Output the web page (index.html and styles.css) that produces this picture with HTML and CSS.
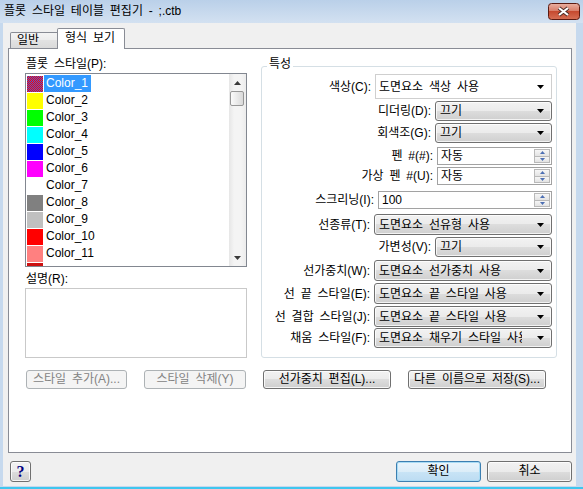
FILE: index.html
```html
<!DOCTYPE html>
<html lang="ko">
<head>
<meta charset="utf-8">
<title>플롯 스타일 테이블 편집기</title>
<link rel="stylesheet" href="styles.css">
</head>
<body>
<div class="window">
  <div class="titlebar">
    <span class="title">플롯 스타일 테이블 편집기 - ;.ctb</span>
    <svg class="close-btn" width="32" height="17" viewBox="0 0 32 17">
      <defs>
        <linearGradient id="cg" x1="0" y1="0" x2="0" y2="1">
          <stop offset="0" stop-color="#eab0a2"/>
          <stop offset="0.45" stop-color="#d9806c"/>
          <stop offset="0.5" stop-color="#c64a30"/>
          <stop offset="1" stop-color="#d77055"/>
        </linearGradient>
      </defs>
      <rect x="0.5" y="0.5" width="31" height="16" rx="3" fill="url(#cg)" stroke="#5b1b12"/>
      <path d="M11 5 L20 12 M20 5 L11 12" stroke="#4a2a25" stroke-width="4" fill="none"/>
      <path d="M11 5 L20 12 M20 5 L11 12" stroke="#ffffff" stroke-width="2.2" fill="none"/>
    </svg>
  </div>
  <div class="client">
    <div class="tabs">
      <div class="tab">일반</div>
      <div class="tab active">형식 보기</div>
    </div>
    <div class="panel">
      <div class="panel-top">
        <div class="left-col">
          <div class="lbl">플롯 스타일(P):</div>
          <div class="listbox">
            <div class="items">
              <div class="item selected"><span class="sw c1"></span><span class="name">Color_1</span></div>
              <div class="item"><span class="sw c2"></span><span class="name">Color_2</span></div>
              <div class="item"><span class="sw c3"></span><span class="name">Color_3</span></div>
              <div class="item"><span class="sw c4"></span><span class="name">Color_4</span></div>
              <div class="item"><span class="sw c5"></span><span class="name">Color_5</span></div>
              <div class="item"><span class="sw c6"></span><span class="name">Color_6</span></div>
              <div class="item"><span class="sw c7"></span><span class="name">Color_7</span></div>
              <div class="item"><span class="sw c8"></span><span class="name">Color_8</span></div>
              <div class="item"><span class="sw c9"></span><span class="name">Color_9</span></div>
              <div class="item"><span class="sw c10"></span><span class="name">Color_10</span></div>
              <div class="item"><span class="sw c11"></span><span class="name">Color_11</span></div>
              <div class="item"><span class="sw c12"></span></div>
            </div>
            <div class="vscroll">
              <div class="sb-btn"><svg width="7" height="4" viewBox="0 0 7 4"><polygon points="0,4 7,4 3.5,0" fill="#3a3a3a"/></svg></div>
              <div class="sb-thumb"></div>
              <div class="sb-track"></div>
              <div class="sb-btn"><svg width="7" height="4" viewBox="0 0 7 4"><polygon points="0,0 7,0 3.5,4" fill="#3a3a3a"/></svg></div>
            </div>
          </div>
          <div class="lbl desc-lbl">설명(R):</div>
          <div class="desc"></div>
        </div>
        <div class="group">
          <div class="group-title">특성</div>
          <div class="rows">
            <div class="row h25 g2">
              <span class="lab">색상(C):</span>
              <div class="combo plain w177"><span class="val">도면요소 색상 사용</span><svg class="arr" width="7" height="4" viewBox="0 0 7 4"><polygon points="0,0 7,0 3.5,4" fill="#000"/></svg></div>
            </div>
            <div class="row h20 g2">
              <span class="lab">디더링(D):</span>
              <div class="combo w117"><span class="val">끄기</span><svg class="arr" width="7" height="4" viewBox="0 0 7 4"><polygon points="0,0 7,0 3.5,4" fill="#000"/></svg></div>
            </div>
            <div class="row h20 g4">
              <span class="lab">회색조(G):</span>
              <div class="combo w117"><span class="val">끄기</span><svg class="arr" width="7" height="4" viewBox="0 0 7 4"><polygon points="0,0 7,0 3.5,4" fill="#000"/></svg></div>
            </div>
            <div class="row h18 g2">
              <span class="lab">펜 #(#):</span>
              <div class="spin w115"><span class="val">자동</span>
                <div class="updown">
                  <div class="ud"><svg width="5" height="3" viewBox="0 0 5 3"><polygon points="0,3 5,3 2.5,0" fill="#4d6fb3"/></svg></div>
                  <div class="ud"><svg width="5" height="3" viewBox="0 0 5 3"><polygon points="0,0 5,0 2.5,3" fill="#4d6fb3"/></svg></div>
                </div>
              </div>
            </div>
            <div class="row h18 g6">
              <span class="lab">가상 펜 #(U):</span>
              <div class="spin w115"><span class="val">자동</span>
                <div class="updown">
                  <div class="ud"><svg width="5" height="3" viewBox="0 0 5 3"><polygon points="0,3 5,3 2.5,0" fill="#4d6fb3"/></svg></div>
                  <div class="ud"><svg width="5" height="3" viewBox="0 0 5 3"><polygon points="0,0 5,0 2.5,3" fill="#4d6fb3"/></svg></div>
                </div>
              </div>
            </div>
            <div class="row h18 g5">
              <span class="lab">스크리닝(I):</span>
              <div class="spin w174"><span class="val">100</span>
                <div class="updown">
                  <div class="ud"><svg width="5" height="3" viewBox="0 0 5 3"><polygon points="0,3 5,3 2.5,0" fill="#4d6fb3"/></svg></div>
                  <div class="ud"><svg width="5" height="3" viewBox="0 0 5 3"><polygon points="0,0 5,0 2.5,3" fill="#4d6fb3"/></svg></div>
                </div>
              </div>
            </div>
            <div class="row h21 g2">
              <span class="lab">선종류(T):</span>
              <div class="combo w178"><span class="val">도면요소 선유형 사용</span><svg class="arr" width="7" height="4" viewBox="0 0 7 4"><polygon points="0,0 7,0 3.5,4" fill="#000"/></svg></div>
            </div>
            <div class="row h20 g3">
              <span class="lab">가변성(V):</span>
              <div class="combo w117"><span class="val">끄기</span><svg class="arr" width="7" height="4" viewBox="0 0 7 4"><polygon points="0,0 7,0 3.5,4" fill="#000"/></svg></div>
            </div>
            <div class="row h21 g2">
              <span class="lab">선가중치(W):</span>
              <div class="combo w178"><span class="val">도면요소 선가중치 사용</span><svg class="arr" width="7" height="4" viewBox="0 0 7 4"><polygon points="0,0 7,0 3.5,4" fill="#000"/></svg></div>
            </div>
            <div class="row h21 g2">
              <span class="lab">선 끝 스타일(E):</span>
              <div class="combo w178"><span class="val">도면요소 끝 스타일 사용</span><svg class="arr" width="7" height="4" viewBox="0 0 7 4"><polygon points="0,0 7,0 3.5,4" fill="#000"/></svg></div>
            </div>
            <div class="row h21 g1">
              <span class="lab">선 결합 스타일(J):</span>
              <div class="combo w178"><span class="val">도면요소 끝 스타일 사용</span><svg class="arr" width="7" height="4" viewBox="0 0 7 4"><polygon points="0,0 7,0 3.5,4" fill="#000"/></svg></div>
            </div>
            <div class="row h20">
              <span class="lab">채움 스타일(F):</span>
              <div class="combo w178"><span class="val cut">도면요소 채우기 스타일 사용</span><svg class="arr" width="7" height="4" viewBox="0 0 7 4"><polygon points="0,0 7,0 3.5,4" fill="#000"/></svg></div>
            </div>
          </div>
        </div>
      </div>
      <div class="btn-row">
        <div class="btn disabled w101">스타일 추가(A)...</div>
        <div class="btn disabled w102">스타일 삭제(Y)</div>
        <div class="btn w128">선가중치 편집(L)...</div>
        <div class="btn w138">다른 이름으로 저장(S)...</div>
      </div>
    </div>
    <div class="footer">
      <div class="btn tall help">?</div>
      <div class="btn tall default ok">확인</div>
      <div class="btn tall cancel">취소</div>
    </div>
  </div>
</div>
</body>
</html>
```

FILE: styles.css
```css
* { box-sizing: border-box; }
html, body { margin: 0; padding: 0; }
body {
  width: 583px;
  height: 489px;
  overflow: hidden;
  font-family: "Liberation Sans", "Noto Sans CJK KR", sans-serif;
  font-size: 12px;
  line-height: 14px;
  word-spacing: 2.5px;
  color: #000;
  background: #c8daee;
}

.window {
  width: 583px;
  height: 489px;
  display: flex;
  flex-direction: column;
  background: #c6d9ee;
  border-bottom: 2px solid #3fc6ee;
}

.titlebar {
  height: 23px;
  flex: none;
  display: flex;
  align-items: flex-start;
  background: linear-gradient(#bad0e9, #d3e1f1);
}
.title { line-height: 23px; padding-left: 4px; white-space: nowrap; }
.close-btn { display: block; margin: 3px 3px 0 auto; }

.client {
  flex: 1;
  margin: 0 7px 1px 3px;
  background: #f0f0f0;
  display: flex;
  flex-direction: column;
  padding-top: 5px;
}

/* tabs */
.tabs {
  height: 20px;
  flex: none;
  display: flex;
  align-items: flex-end;
  padding-left: 7px;
}
.tab {
  height: 16px;
  width: 49px;
  padding-left: 6px;
  line-height: 15px;
  border: 1px solid #898c95;
  border-bottom: none;
  border-radius: 2px 2px 0 0;
  background: linear-gradient(#f4f4f4, #ececec 50%, #e2e2e2 50%, #dadada);
  white-space: nowrap;
}
.tab.active {
  position: relative;
  z-index: 1;
  height: 21px;
  width: 68px;
  margin-left: -2px;
  margin-bottom: -1px;
  padding-left: 7px;
  line-height: 19px;
  background: #fff;
}

/* panel */
.panel {
  height: 405px;
  flex: none;
  margin: 0 4px 0 5px;
  border: 1px solid #898c95;
  background: #fff;
  display: flex;
  flex-direction: column;
}
.panel-top { display: flex; padding-top: 8px; }

.left-col {
  margin-left: 16px;
  width: 222px;
  display: flex;
  flex-direction: column;
}
.lbl { padding-left: 1px; line-height: 14px; white-space: nowrap; }
.desc-lbl { margin-top: 5px; }

.listbox {
  margin-top: 2px;
  height: 194px;
  border: 1px solid #828790;
  background: #fff;
  display: flex;
  overflow: hidden;
}
.items { flex: 1; overflow: hidden; padding-top: 1px; }
.item { height: 17px; display: flex; align-items: flex-start; word-spacing: 0; }
.sw { width: 16px; height: 16px; margin: 1px 0 0 1px; flex: none; }
.name { margin-left: 1px; padding: 0 3px 0 2px; line-height: 17px; height: 17px; }
.item.selected .name { background: #3399ff; color: #fff; }

.c1 { background: repeating-conic-gradient(#ff0000 0 25%, #4a5cd8 0 50%) 0 0 / 2px 2px; }
.c2 { background: #ffff00; }
.c3 { background: #00ff00; }
.c4 { background: #00ffff; }
.c5 { background: #0000ff; }
.c6 { background: #ff00ff; }
.c7 { background: #ffffff; }
.c8 { background: #808080; }
.c9 { background: #c0c0c0; }
.c10 { background: #ff0000; }
.c11 { background: #ff8080; }
.c12 { background: #cc1010; }

.vscroll {
  width: 17px;
  flex: none;
  display: flex;
  flex-direction: column;
  background: linear-gradient(90deg, #e6e6e6, #f4f4f4 30%, #f4f4f4 70%, #ececec);
}
.sb-btn { height: 17px; flex: none; display: flex; align-items: center; justify-content: center; }
.sb-btn svg { display: block; }
.sb-thumb {
  height: 15px;
  flex: none;
  margin: 0 2px 0 1px;
  border: 1px solid #979797;
  border-radius: 2px;
  background: linear-gradient(90deg, #fafafa, #eaeaea 50%, #d9d9d9);
}
.sb-track { flex: 1; }

.desc {
  margin-top: 2px;
  height: 70px;
  border: 1px solid #c9c9c9;
  background: #fff;
}

/* group box */
.group {
  margin: 9px 0 0 14px;
  width: 296px;
  height: 292px;
  border: 1px solid #d5dfe5;
  border-radius: 3px;
  display: flex;
  flex-direction: column;
}
.group-title {
  align-self: flex-start;
  margin: -10px 0 0 5px;
  padding: 0 2px;
  line-height: 14px;
  background: #fff;
}
.rows {
  margin-top: 3px;
  padding-right: 4px;
  display: flex;
  flex-direction: column;
}
.row { display: flex; justify-content: flex-end; align-items: center; }
.row .lab { margin-right: 4px; white-space: nowrap; }
.h25 { height: 25px; }
.h21 { height: 21px; }
.h20 { height: 20px; }
.h18 { height: 18px; }
.g1 { margin-bottom: 1px; }
.g2 { margin-bottom: 2px; }
.g3 { margin-bottom: 3px; }
.g4 { margin-bottom: 4px; }
.g5 { margin-bottom: 5px; }
.g6 { margin-bottom: 6px; }

.w115 { width: 115px; }
.w117 { width: 117px; }
.w174 { width: 174px; }
.w177 { width: 177px; }
.w178 { width: 178px; }
.w101 { width: 101px; }
.w102 { width: 102px; }
.w128 { width: 128px; }
.w138 { width: 138px; }

.combo {
  height: 100%;
  display: flex;
  align-items: center;
  padding-left: 4px;
  border: 1px solid #707070;
  border-radius: 3px;
  background: linear-gradient(#f2f2f2, #ebebeb 50%, #dddddd 50%, #cfcfcf);
  box-shadow: inset 0 0 0 1px rgba(255, 255, 255, 0.75);
}
.combo.plain {
  border: 1px solid #cfcfcf;
  border-radius: 0;
  background: #fff;
  box-shadow: none;
  padding-left: 3px;
}
.val { flex: 1; overflow: hidden; white-space: nowrap; }
.val.cut { flex: none; width: 143px; }
.combo .arr { display: block; flex: none; margin: 0 7px 0 auto; }

.spin {
  height: 100%;
  display: flex;
  align-items: center;
  padding: 1px 1px 1px 3px;
  border: 1px solid #a2a2a2;
  background: #fff;
}
.updown {
  width: 16px;
  height: 100%;
  flex: none;
  display: flex;
  flex-direction: column;
  border: 1px solid #b9b9b9;
}
.ud {
  flex: 1;
  display: flex;
  align-items: center;
  justify-content: center;
  background: linear-gradient(#f6f6f6, #e3e3e3);
}
.ud + .ud { border-top: 1px solid #b9b9b9; }
.ud svg { display: block; }

/* buttons */
.btn-row {
  display: flex;
  gap: 17px;
  margin-top: 12px;
  padding-left: 17px;
}
.btn {
  height: 19px;
  line-height: 17px;
  text-align: center;
  white-space: nowrap;
  border: 1px solid #707070;
  border-radius: 3px;
  background: linear-gradient(#f2f2f2, #ebebeb 50%, #dddddd 50%, #cfcfcf);
  box-shadow: inset 0 0 0 1px rgba(255, 255, 255, 0.8);
}
.btn.disabled {
  border-color: #adb2b5;
  background: #f4f4f4;
  color: #838383;
  box-shadow: none;
}

.footer {
  display: flex;
  margin-top: 8px;
  padding: 0 4px 0 7px;
}
.btn.tall { height: 21px; line-height: 19px; }
.help {
  width: 21px;
  font-family: "Liberation Serif", serif;
  font-weight: bold;
  font-size: 16px;
  color: #000080;
}
.ok { width: 85px; margin-left: auto; }
.btn.default {
  border-color: #3c7fb1;
  background: linear-gradient(#eaf5fc, #dcedf8 50%, #c9e4f6 50%, #bcdcf2);
  box-shadow: inset 0 0 0 1px #a9dcf5;
}
.cancel { width: 85px; margin-left: 6px; }
```
